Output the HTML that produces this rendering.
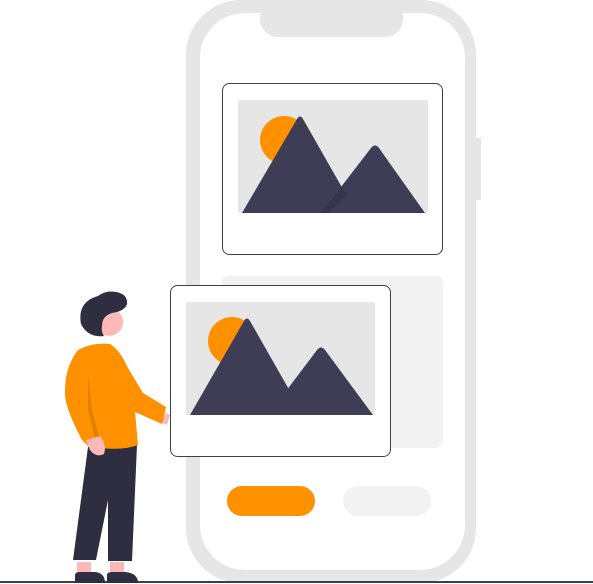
<!DOCTYPE html>
<html><head><style>html,body{margin:0;padding:0;background:#fff;width:593px;height:584px;overflow:hidden}</style></head>
<body>
<svg width="593" height="584" viewBox="0 0 593 584" xmlns="http://www.w3.org/2000/svg">
<rect x="476" y="138" width="5" height="62" fill="#e6e6e6"/>
<path d="M241 0 H421 A55 55 0 0 1 476 55 V528 A55 55 0 0 1 421 583 H241 A55 55 0 0 1 186 528 V55 A55 55 0 0 1 241 0 Z" fill="#e6e6e6"/>
<path d="M245 13 H420 A45 45 0 0 1 465 58 V525 A45 45 0 0 1 420 570 H245 A45 45 0 0 1 200 525 V58 A45 45 0 0 1 245 13 Z" fill="#fff"/>
<rect x="260" y="0" width="143" height="37" rx="18" fill="#e6e6e6"/>
<rect x="222.5" y="83.5" width="220" height="171" rx="7" fill="#fff" stroke="#3f3d56" stroke-width="1"/>
<rect x="238" y="100" width="190" height="113" rx="2" fill="#e6e6e6"/>
<circle cx="284" cy="140" r="24" fill="#ff9100"/>
<path d="M242 213 L297 119 Q300 114 303 119 L348 198 L338 213 Z" fill="#3f3d56"/>
<path d="M321 213 L371 148 Q375 143 379 148 L425 213 Z" fill="#3f3d56"/>
<path d="M321 213 L342 186 L347 196 L328 213Z" fill="#2f2e41" opacity="0.5"/>
<rect x="222" y="276" width="221" height="172" rx="7" fill="#f2f2f2"/>
<rect x="170.5" y="285.5" width="220" height="171" rx="7" fill="#fff" stroke="#3f3d56" stroke-width="1"/>
<rect x="186" y="302" width="189" height="113" rx="2" fill="#e6e6e6"/>
<circle cx="232" cy="341" r="24" fill="#ff9100"/>
<path d="M190 415 L244 321 Q247 316 250 321 L295 400 L285 415 Z" fill="#3f3d56"/>
<path d="M268 415 L317 350 Q321 345 325 350 L373 415 Z" fill="#3f3d56"/>
<rect x="227" y="486" width="88" height="30" rx="15" fill="#ff9100"/>
<rect x="343" y="486" width="88" height="30" rx="15" fill="#f2f2f2"/>
<rect x="0" y="581" width="593" height="2" fill="#3f3d56"/>
<rect x="77" y="562" width="14" height="14" fill="#ffb8b8"/>
<rect x="110" y="562" width="14" height="14" fill="#ffb8b8"/>
<path d="M75 583 V575 Q75 572 80 572 H95 Q105 573 105 583Z" fill="#2f2e41"/>
<path d="M107 583 V575 Q107 572 112 572 H125 Q138 573 138 583Z" fill="#2f2e41"/>
<path d="M88 447 L137 445 L132 561 L108 561 L108 500 L96 560 L73 560 Z" fill="#2f2e41"/>
<path d="M163 412 L170 415 L167 425 L160 422Z" fill="#ffb8b8"/>
<path d="M78 350 Q92 342 110 344 Q120 350 128 368 L143 393 L166 407 L162 424 L135 412 L138 445 Q120 452 88 446 L82 440 Q66 410 65 395 Q64 368 78 350Z" fill="#ff9100"/>
<path d="M88 374 L92 410 L100 440 L96 442 L88 410Z" fill="#000" opacity="0.12"/>
<path d="M86 440 L100 436 Q107 445 104 454 Q96 458 90 450Z" fill="#ffb8b8"/>
<circle cx="109" cy="322" r="14" fill="#ffb8b8"/>
<path d="M98 296 Q106 290 116 292 Q128 294 127 304 Q125 311 112 313 Q102 316 102 326 Q101 332 104 336 Q88 338 81 324 Q77 302 98 296Z" fill="#2f2e41"/>
</svg>
</body></html>
